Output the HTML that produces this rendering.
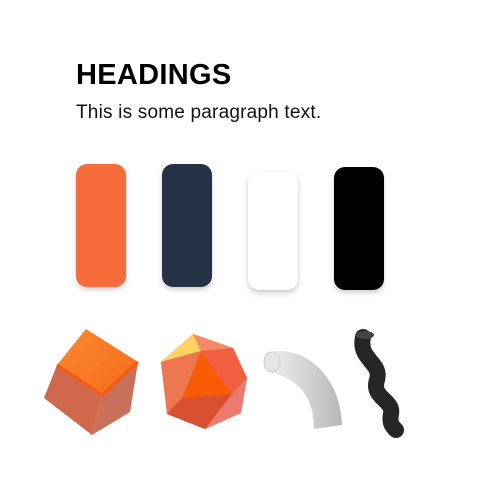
<!DOCTYPE html>
<html><head><style>
body{margin:0;width:489px;height:494px;background:#fff;position:relative;overflow:hidden;font-family:"Liberation Sans",sans-serif}
h1{position:absolute;left:76px;top:59px;margin:0;font-size:29px;font-weight:bold;color:#000;letter-spacing:0.3px}
p{position:absolute;left:76px;top:102px;margin:0;font-size:19px;color:#111;letter-spacing:0.2px}
.s{position:absolute;width:50px;border-radius:11px;box-shadow:0 3px 5px rgba(0,0,0,0.18)}
</style></head><body>
<h1>HEADINGS</h1>
<p>This is some paragraph text.</p>
<div class="s" style="left:76px;top:164px;height:123px;background:#f76c3b"></div>
<div class="s" style="left:162px;top:164px;height:123px;background:#263245"></div>
<div class="s" style="left:248px;top:172px;height:118px;background:#fff;box-shadow:0 3px 6px rgba(0,0,0,0.2),0 0 1px rgba(0,0,0,0.1)"></div>
<div class="s" style="left:334px;top:167px;height:123px;background:#000"></div>
<svg width="489" height="494" style="position:absolute;left:0;top:0">
<defs>
<linearGradient id="ct" x1="0" y1="0" x2="1" y2="1"><stop offset="0" stop-color="#fb8a2e"/><stop offset="1" stop-color="#f46a1c"/></linearGradient>
<linearGradient id="tb" x1="0" y1="0" x2="1" y2="0"><stop offset="0" stop-color="#f0f0f0"/><stop offset="1" stop-color="#b8b8b8"/></linearGradient>
</defs>
<polygon points="86,329 138,362 102,395 57,365" fill="url(#ct)"/>
<polygon points="57,365 102,395 92,435 44,398" fill="#d0694a"/>
<polygon points="102,395 138,362 130,412 92,435" fill="#c8705a"/>
<polyline points="57,365 102,395 138,362" fill="none" stroke="#f45a10" stroke-width="3"/>
<polygon points="193,334 233,348 247,378 241,413 205,429 167,414 161,362" fill="#e8604a"/>
<polygon points="161,362 193,334 201,351" fill="#ffd262"/>
<polygon points="201,351 182,398 232,394" fill="#f85a06"/>
<polygon points="193,334 233,348 201,351" fill="#f58a6a"/>
<polygon points="201,351 233,348 247,378 232,394" fill="#f06040"/>
<polygon points="161,362 201,351 182,398 167,414" fill="#ee7650"/>
<polygon points="182,398 232,394 205,429 167,414" fill="#d95030"/>
<polygon points="232,394 247,378 241,413 205,429" fill="#ec7a70"/>
<path d="M268,352 C305,345 340,375 342,425 L314,429 C314,395 297,378 268,372 Z" fill="url(#tb)"/>
<ellipse cx="272" cy="362" rx="8" ry="10" fill="#e6e6e6" stroke="#ccc"/>
<path d="M363,337 C358,360 382,362 377,380 C371,398 394,400 391,414 C389,424 393,427 396,430" fill="none" stroke="#262626" stroke-width="16" stroke-linecap="round"/>
<ellipse cx="365" cy="335" rx="9" ry="4" fill="#444"/>
</svg>
</body></html>
